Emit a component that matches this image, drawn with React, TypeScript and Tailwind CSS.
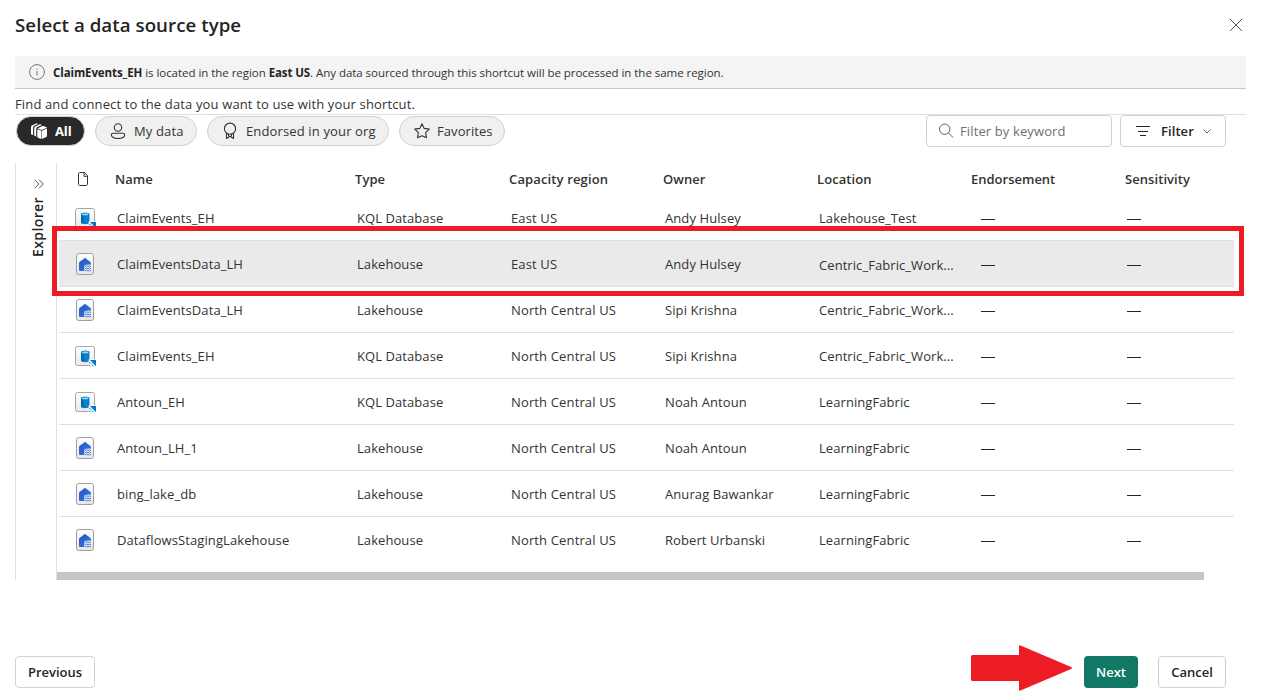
import type { ReactNode } from "react";

type Kind = "kql" | "lake";
type Row = {
  kind: Kind;
  name: string;
  type: string;
  region: string;
  owner: string;
  location: string;
  selected?: boolean;
};

const rows: Row[] = [
  { kind: "kql", name: "ClaimEvents_EH", type: "KQL Database", region: "East US", owner: "Andy Hulsey", location: "Lakehouse_Test" },
  { kind: "lake", name: "ClaimEventsData_LH", type: "Lakehouse", region: "East US", owner: "Andy Hulsey", location: "Centric_Fabric_Work...", selected: true },
  { kind: "lake", name: "ClaimEventsData_LH", type: "Lakehouse", region: "North Central US", owner: "Sipi Krishna", location: "Centric_Fabric_Work..." },
  { kind: "kql", name: "ClaimEvents_EH", type: "KQL Database", region: "North Central US", owner: "Sipi Krishna", location: "Centric_Fabric_Work..." },
  { kind: "kql", name: "Antoun_EH", type: "KQL Database", region: "North Central US", owner: "Noah Antoun", location: "LearningFabric" },
  { kind: "lake", name: "Antoun_LH_1", type: "Lakehouse", region: "North Central US", owner: "Noah Antoun", location: "LearningFabric" },
  { kind: "lake", name: "bing_lake_db", type: "Lakehouse", region: "North Central US", owner: "Anurag Bawankar", location: "LearningFabric" },
  { kind: "lake", name: "DataflowsStagingLakehouse", type: "Lakehouse", region: "North Central US", owner: "Robert Urbanski", location: "LearningFabric" },
];

function KqlIcon() {
  return (
    <svg width="22" height="22" viewBox="0 0 22 22" className="block">
      <defs>
        <linearGradient id="kqlTile" x1="0" y1="0" x2="0" y2="1">
          <stop offset="0" stopColor="#fdfdfd" />
          <stop offset="1" stopColor="#e9e9e9" />
        </linearGradient>
        <linearGradient id="kqlCan" x1="0" y1="0" x2="1" y2="0">
          <stop offset="0" stopColor="#0064b0" />
          <stop offset="0.6" stopColor="#0f86cf" />
          <stop offset="1" stopColor="#0078c4" />
        </linearGradient>
      </defs>
      <rect x="0.5" y="0.5" width="19" height="19" rx="2" fill="url(#kqlTile)" stroke="#a6a6a6" />
      <path d="M6 6v8.500c0 1 1.800 1.700 4.200 1.700s4.200-.7 4.200-1.700V6z" fill="url(#kqlCan)" />
      <ellipse cx="10.200" cy="6.100" rx="4.200" ry="1.500" fill="#1585cc" />
      <ellipse cx="10.200" cy="6.400" rx="3.200" ry="0.900" fill="#8edcf8" />
      <path d="M13.600 13.300h8.400v8.700h-8.400z" fill="#fff" opacity="0.9" />
      <path d="M15 14h6v6.200z" fill="#0078c4" />
      <path d="M14 16.600l1.600.3 1.700 1.400.9 2M13.900 19l1.300.4.700 1.300" stroke="#1b8fd2" strokeWidth="1" strokeDasharray="1.600 0.700" fill="none" />
    </svg>
  );
}

function LakeIcon() {
  return (
    <svg width="18" height="22" viewBox="0 0 18 22" className="block">
      <defs>
        <linearGradient id="lakeTile" x1="0" y1="0" x2="0" y2="1">
          <stop offset="0" stopColor="#fdfdfd" />
          <stop offset="1" stopColor="#e6e6e6" />
        </linearGradient>
        <linearGradient id="lakeHouse" x1="0" y1="0" x2="1" y2="1">
          <stop offset="0" stopColor="#1f57c0" />
          <stop offset="1" stopColor="#3b78e7" />
        </linearGradient>
      </defs>
      <rect x="0.5" y="0.5" width="17" height="21" rx="2.200" fill="url(#lakeTile)" stroke="#9e9e9e" />
      <path
        d="M8.200 5.400c.5-.4 1.100-.4 1.600 0l4.400 3.400c.5.400.8.900.8 1.500v1.600c-1.300-.7-2.300 0-3.500-.2-1.600-.2-3 .3-3.200 1.500-.1.800.3 1.300.1 2.200-.2.800-.3 1.300.3 2.600H4.300c-.7 0-1.300-.6-1.300-1.300v-6.400c0-.6.300-1.100.8-1.500z"
        fill="url(#lakeHouse)"
      />
      <path
        d="M9.200 13.600l1.200-.9 1.600.9 1.500-.9 1.500.9M9.200 15.800l1.200-.9 1.600.9 1.500-.9 1.500.9M9.200 18l1.200-.9 1.600.9 1.500-.9 1.500.9"
        fill="none"
        stroke="#2f6ad0"
        strokeWidth="0.900"
      />
    </svg>
  );
}

function StackIcon() {
  return (
    <svg width="18" height="18" viewBox="0 0 18 18" fill="#fff" className="block">
      <path d="M1 12.200V4.800c0-.6.300-1 .9-1.300L6 1.600c.5-.2.900-.2 1.400 0l.6.300-3.800 1.800c-.7.400-1.100.9-1.100 1.700v7.700l-1.400-.6c-.5-.2-.7-.3-.7-.3z" />
      <path d="M4.200 13.500V6c0-.7.300-1.200.9-1.500l4.300-2c.5-.2 1-.2 1.500 0l.9.400-4.400 2c-.8.400-1.200 1-1.200 1.800v7.800l-1.300-.5c-.5-.2-.7-.5-.7-.5z" />
      <path d="M7.300 7.200L11.300 8.700V17l-3.300-1.200c-.5-.2-.7-.5-.7-1zM7.500 6.500c.1-.2.400-.5.800-.6l4-1.800c.4-.2.800-.2 1.200 0l3 1.200c.3.100.4.200.5.400l-5.400 2.400zM11.800 8.700l5.200-2.300v7.400c0 .6-.3 1-.8 1.200L11.800 17z" />
    </svg>
  );
}

function Pill({ icon, label, className }: { icon: ReactNode; label: string; className: string }) {
  return (
    <button className={`flex h-[30px] items-center rounded-full border border-[#d1d1d1] bg-[#f0f0f0] ${className}`}>
      {icon}
      <span className="whitespace-nowrap">{label}</span>
    </button>
  );
}

const line = { fill: "none", stroke: "#333", strokeWidth: 1.1, strokeLinejoin: "round", strokeLinecap: "round" } as const;

const grid = "grid grid-cols-[56px_240px_154px_154px_154px_154px_1fr]";

function Dash() {
  return <span className="mt-[3px] ml-[10px] h-px w-[14px] bg-[#242424]" />;
}

export default function App() {
  return (
    <div className="relative flex h-[699px] w-[1270px] flex-col overflow-hidden bg-white pl-[15px] font-['Open_Sans','Noto_Sans',sans-serif] text-[13px] leading-5 tracking-[0.07px] text-[#333]">
      <header className="flex h-[56px] items-start justify-between pr-[27px]">
        <h1 className="mt-[11px] text-[18.7px] leading-7 font-semibold tracking-[0.05px] text-[#242424]">Select a data source type</h1>
        <svg width="14" height="14" viewBox="0 0 14 14" className="mt-[18px]">
          <path d="M1 1l12 12M13 1L1 13" stroke="#555" strokeWidth="1" fill="none" />
        </svg>
      </header>

      <div className="flex h-[33px] w-[1231px] shrink-0 items-center border-b border-[#c8c8c8] bg-[#f4f4f4] pl-[14px]">
        <svg width="16" height="16" viewBox="0 0 16 16" className="mr-[8px]">
          <circle cx="8" cy="8" r="7.400" fill="none" stroke="#666" strokeWidth="0.900" />
          <path d="M8 7v4.500M8 4.500v1.200" stroke="#777" strokeWidth="1" />
        </svg>
        <p className="mt-px text-[11.500px] leading-4 whitespace-nowrap tracking-[-0.04px]">
          <b className="font-bold tracking-[-0.1px] text-[#242424]">ClaimEvents_EH</b> is located in the region <b className="font-bold tracking-[-0.1px] text-[#242424]">East US</b>. Any data sourced through this shortcut will be processed in the same region.
        </p>
      </div>

      <p className="h-[26px] w-[1231px] shrink-0 border-b border-[#e0e0e0] pt-[5px] whitespace-nowrap tracking-[0.14px]">
        Find and connect to the data you want to use with your shortcut.
      </p>

      <div className="flex h-[48px] shrink-0 items-start">
        <div className="mt-px ml-px flex gap-[10px]">
          <button className="flex h-[30px] w-[69px] items-center rounded-full border border-[#d1d1d1] bg-[#292929] pl-[13px] font-bold text-white">
            <StackIcon />
            <span className="ml-[7px] tracking-[-0.1px]">All</span>
          </button>
          <Pill
            className="w-[102px] gap-[8px] pl-[14px] tracking-[0.14px]"
            label="My data"
            icon={
              <svg width="16" height="16" viewBox="0 0 16 16" {...line}>
                <circle cx="8" cy="4.500" r="3.700" />
                <path d="M3 10.300h10c.9 0 1.700.7 1.700 1.500 0 2.300-2.800 3.700-6.700 3.700s-6.700-1.400-6.700-3.700c0-.8.8-1.500 1.700-1.500z" />
              </svg>
            }
          />
          <Pill
            className="w-[182px] gap-[8px] pl-[14px] tracking-[0.14px]"
            label="Endorsed in your org"
            icon={
              <svg width="16" height="18" viewBox="0 0 16 18" {...line}>
                <circle cx="8" cy="6.700" r="5.600" />
                <path d="M4.500 11.200v5.300L8 14.300l3.500 2.200v-5.300M6.500 12.300v1.500M9.500 12.300v1.500" />
              </svg>
            }
          />
          <Pill
            className="w-[106px] gap-[7px] pl-[14px]"
            label="Favorites"
            icon={
              <svg width="16" height="16" viewBox="0 0 16 16" {...line}>
                <path d="M8 .8l2.200 4.600 5.100.7-3.700 3.600.9 5.100L8 12.800l-4.500 2 .9-5.100L.7 6.100l5.100-.7z" />
              </svg>
            }
          />
        </div>
        <div className="ml-[421px] flex h-[32px] w-[186px] items-center rounded border border-[#d1d1d1] bg-white pl-[12px] text-[#707070]">
          <svg width="16" height="16" viewBox="0 0 16 16" fill="none" stroke="#616161" className="mr-[5px]">
            <circle cx="5.700" cy="6.200" r="5.200" />
            <path d="M9.500 10l4.700 4.700" />
          </svg>
          <span className="tracking-[0.12px]">Filter by keyword</span>
        </div>
        <button className="ml-[8px] flex h-[32px] w-[106px] items-center rounded border border-[#d1d1d1] bg-white pl-[15px] font-semibold text-[#242424]">
          <svg width="14" height="10" viewBox="0 0 14 10" className="mr-[11px]">
            <path d="M0 .5h14M2 5.500h10M4 9.500h6" stroke="#242424" />
          </svg>
          Filter
          <svg width="8" height="5" viewBox="0 0 8 5" className="ml-[9px]">
            <path d="M.5.5L4 4 7.500.5" fill="none" stroke="#616161" />
          </svg>
        </button>
      </div>

      <main className="flex h-[417px] w-[1219px] shrink-0">
        <aside className="flex w-[42px] shrink-0 flex-col items-center border-x border-[#e0e0e0]">
          <svg width="10" height="10" viewBox="0 0 10 10" className="mt-[16px] ml-[6px] shrink-0">
            <path d="M.5.700L4.800 5 .5 9.300M5 .700L9.300 5 5 9.300" fill="none" stroke="#555" />
          </svg>
          <span className="mt-[8px] ml-[3px] rotate-180 text-[14px] leading-5 font-semibold tracking-[0.4px] [writing-mode:vertical-rl] text-[#242424]">Explorer</span>
        </aside>

        <section className="flex w-[1177px] flex-col">
          <div className={`${grid} h-[32px] items-center font-semibold`}>
            <svg width="12" height="14" viewBox="0 0 12 14" className="ml-[21px]" fill="none" stroke="#333">
              <path d="M2 .5h4.500L9.500 3.800V12c0 .9-.6 1.500-1.500 1.500H2C1.100 13.500.5 12.900.5 12V2C.5 1.100 1.100.5 2 .5zM6 .8v3.500h3.500" />
            </svg>
            <span className="pl-[2px]">Name</span>
            <span className="pl-[2px]">Type</span>
            <span className="pl-[2px] tracking-[0.14px]">Capacity region</span>
            <span className="pl-[2px]">Owner</span>
            <span className="pl-[2px]">Location</span>
            <span className="flex">
              <span className="w-[154px] pl-[2px] tracking-normal">Endorsement</span>
              <span className="pl-[2px]">Sensitivity</span>
            </span>
          </div>

          <div className="ml-[2px]">
            {rows.map((r, i) => (
              <div
                key={i}
                className={`${grid} h-[46px] items-center border-b ${i === rows.length - 1 ? "border-transparent" : "border-[#e0e0e0]"} ${r.selected ? "bg-[#eaeaea]" : ""}`}
              >
                {r.kind === "kql" ? (
                  <span className="mt-[3px] ml-[16px]"><KqlIcon /></span>
                ) : (
                  <span className="mt-[1px] ml-[17px]"><LakeIcon /></span>
                )}
                <span className="pl-[2px] tracking-[0.09px]">{r.name}</span>
                <span className="pl-[2px]">{r.type}</span>
                <span className="pl-[2px] tracking-[0.14px]">{r.region}</span>
                <span className="pl-[2px] tracking-[0.09px]">{r.owner}</span>
                <span className={r.selected ? "pt-[2px] pl-[2px]" : "pl-[2px]"}>{r.location}</span>
                <span className="flex">
                  <span className="flex w-[146px]"><Dash /></span>
                  <Dash />
                </span>
              </div>
            ))}
          </div>
          <div className="mt-[9px] h-[8px] w-[1147px] shrink-0 bg-[#c6c6c6]" />
        </section>
      </main>

      <footer className="mt-[65px] flex h-[46px] shrink-0 items-start font-semibold tracking-normal text-[#242424]">
        <button className="mt-[11px] h-[32px] w-[80px] rounded border border-[#d1d1d1] bg-white">Previous</button>
        <svg width="102" height="46" viewBox="0 0 102 46" className="ml-[876px]">
          <path d="M1.500 10H48V1.300q0-1.300 1.500-.8L99.500 21.800q3 1.200 0 2.400L49.500 45.500q-1.500.5-1.500-.8V36H1.500Q0 36 0 34.500v-23Q0 10 1.500 10z" fill="#ed1c24" />
        </svg>
        <button className="mt-[11px] ml-[11px] h-[32px] w-[54px] rounded bg-[#117865] text-white">Next</button>
        <button className="mt-[11px] ml-[20px] h-[32px] w-[68px] rounded border border-[#d1d1d1] bg-white">Cancel</button>
      </footer>

      <div className="pointer-events-none absolute top-[226px] left-[52px] h-[70px] w-[1192px] border-5 border-[#ed1c24]" />
    </div>
  );
}
